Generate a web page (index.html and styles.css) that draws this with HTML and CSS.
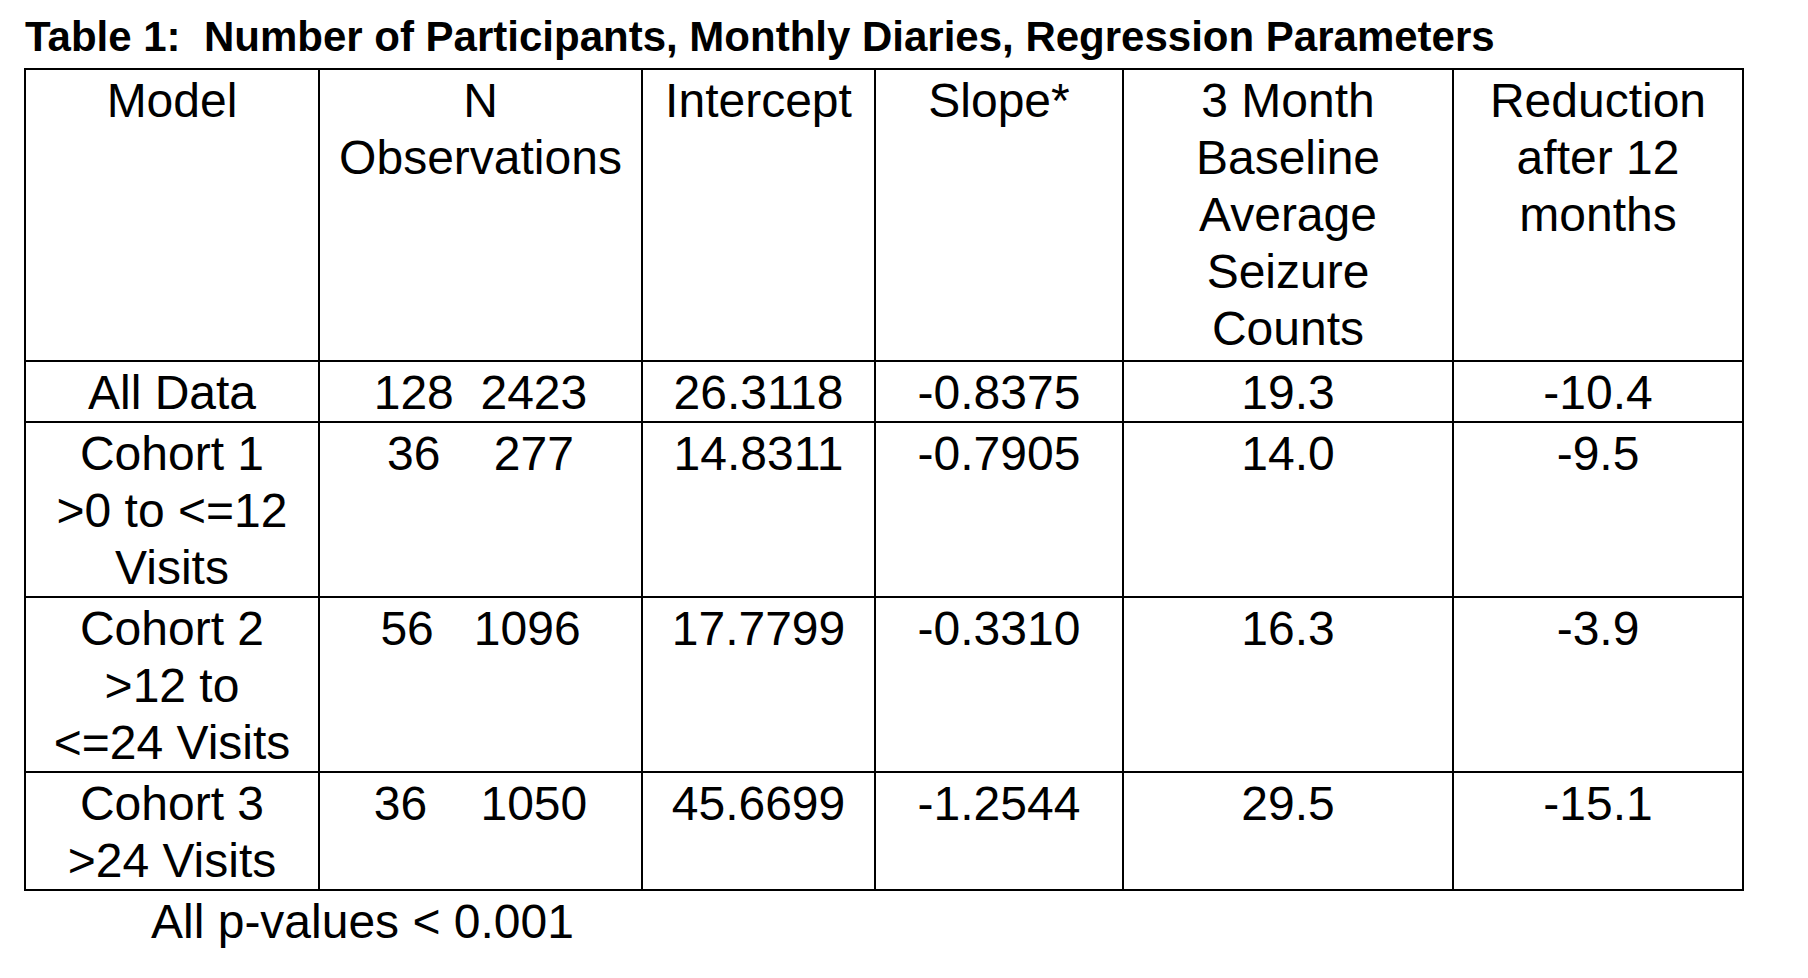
FILE: index.html
```html
<!DOCTYPE html>
<html>
<head>
<meta charset="utf-8">
<title>Table 1</title>
<link rel="stylesheet" href="styles.css">
</head>
<body>
<div class="page">
  <h1 class="title">Table 1:  Number of Participants, Monthly Diaries, Regression Parameters</h1>
  <table class="data">
    <colgroup>
      <col class="c-model">
      <col class="c-n">
      <col class="c-int">
      <col class="c-slope">
      <col class="c-base">
      <col class="c-red">
    </colgroup>
    <thead>
      <tr class="head">
        <th>Model</th>
        <th>N<br>Observations</th>
        <th>Intercept</th>
        <th>Slope*</th>
        <th>3 Month<br>Baseline<br>Average<br>Seizure<br>Counts</th>
        <th>Reduction<br>after 12<br>months</th>
      </tr>
    </thead>
    <tbody>
      <tr class="r1">
        <td>All Data</td>
        <td class="pre">128  2423</td>
        <td>26.3118</td>
        <td>-0.8375</td>
        <td>19.3</td>
        <td>-10.4</td>
      </tr>
      <tr class="r2">
        <td>Cohort 1<br>&gt;0 to &lt;=12<br>Visits</td>
        <td class="pre">36    277</td>
        <td>14.8311</td>
        <td>-0.7905</td>
        <td>14.0</td>
        <td>-9.5</td>
      </tr>
      <tr class="r3">
        <td>Cohort 2<br>&gt;12 to<br>&lt;=24 Visits</td>
        <td class="pre">56   1096</td>
        <td>17.7799</td>
        <td>-0.3310</td>
        <td>16.3</td>
        <td>-3.9</td>
      </tr>
      <tr class="r4">
        <td>Cohort 3<br>&gt;24 Visits</td>
        <td class="pre">36    1050</td>
        <td>45.6699</td>
        <td>-1.2544</td>
        <td>29.5</td>
        <td>-15.1</td>
      </tr>
    </tbody>
  </table>
  <p class="note">All p-values &lt; 0.001</p>
</div>
</body>
</html>
```

FILE: styles.css
```css
html, body {
  margin: 0;
  padding: 0;
  background: #ffffff;
  color: #000000;
}

body {
  font-family: "Liberation Sans", Arial, Helvetica, sans-serif;
}

.page {
  padding: 13px 0 0 24px;
}

.title {
  margin: 0 0 7px 1px;
  font-size: 42px;
  line-height: 48px;
  font-weight: bold;
  white-space: pre;
}

.data {
  border-collapse: collapse;
  table-layout: fixed;
  width: 1720px;
  font-size: 48px;
  line-height: 57px;
}

.c-model { width: 294px; }
.c-n { width: 323px; }
.c-int { width: 233px; }
.c-slope { width: 248px; }
.c-base { width: 330px; }
.c-red { width: 290px; }

.data th,
.data td {
  border: 2px solid #000000;
  padding: 2px 0 0 0;
  text-align: center;
  vertical-align: top;
  font-weight: normal;
  white-space: nowrap;
}

.data .head th {
  padding-bottom: 3px;
}

.data .pre {
  white-space: pre;
}

.note {
  margin: 2px 0 0 0;
  padding-left: 127px;
  font-size: 48px;
  line-height: 57px;
}
```
